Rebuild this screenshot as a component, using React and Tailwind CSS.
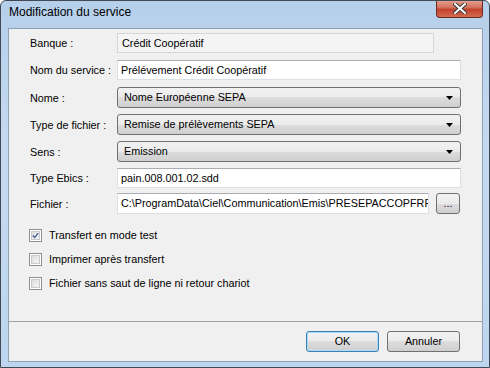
export default function App() {
  const label = "w-[87px] shrink-0 pt-[1px] text-[10.8px] leading-none text-black";
  const combo =
    "h-[21px] w-[344px] flex items-center justify-between pl-[6px] pr-[7px] border border-[#707070] rounded-[3px] bg-[linear-gradient(to_bottom,#f2f2f2_0%,#ebebeb_50%,#dddddd_50%,#cfcfcf_100%)] text-[10.8px] text-black";
  const textbox =
    "flex items-center pl-[3px] bg-white border border-[#dbdfe6] border-t-[#abadb3] text-[10.8px] text-black overflow-hidden whitespace-nowrap";
  const gradient =
    "rounded-[3px] border bg-[linear-gradient(to_bottom,#f2f2f2_0%,#ebebeb_50%,#dddddd_50%,#cfcfcf_100%)] text-[10.8px] text-black";

  const Arrow = () => (
    <svg width="7" height="4" viewBox="0 0 7 4">
      <path d="M0 0 H7 L3.5 4 Z" fill="#000" />
    </svg>
  );

  const Check = ({ checked }) => (
    <div className="w-[13px] h-[13px] border border-[#8e8f8f] bg-white p-[1px] shrink-0">
      <div className="w-full h-full border border-[#c7c9cc] bg-[linear-gradient(135deg,#dcdcdc,#f6f6f6)] flex items-center justify-center">
        {checked && (
          <svg width="9" height="9" viewBox="0 0 9 9">
            <path d="M1 4.5 L3.5 7 L8 1.5" fill="none" stroke="#4a5f97" strokeWidth="1.8" />
          </svg>
        )}
      </div>
    </div>
  );

  return (
    <div
      className="w-[490px] h-[368px] flex flex-col border border-[#3f4a56] rounded-t-[6px] bg-[linear-gradient(to_bottom,#b6cfea,#c4daf0_40%,#bdd5ee)] overflow-hidden"
      style={{ fontFamily: '"Liberation Sans", Arial, sans-serif' }}
    >
      {/* barre de titre */}
      <div className="h-[27px] flex items-start shrink-0">
        <div className="pl-[8px] pt-[5px] text-[12px] leading-none text-black">Modification du service</div>
        <div className="ml-auto mr-[6px] mt-[-1px] w-[47px] h-[18px] rounded-b-[4px] border border-[#6e2a20] border-t-0 bg-[linear-gradient(to_bottom,#e8a493,#d0705b_45%,#c2412c_55%,#d46a4e)] flex items-center justify-center">
          <svg width="14" height="11" viewBox="0 0 14 11">
            <path d="M2 1 L12 10 M12 1 L2 10" stroke="#3a3a3a" strokeWidth="4" strokeLinecap="square" />
            <path d="M2 1 L12 10 M12 1 L2 10" stroke="#ffffff" strokeWidth="2" strokeLinecap="square" />
          </svg>
        </div>
      </div>

      {/* zone client */}
      <div className="ml-[7px] mr-[6px] h-[334px] shrink-0 border border-[#8da2b9] bg-[#f0f0f0] flex flex-col">
        <div className="flex-1 flex flex-col pl-[21px]">
          <div className="flex items-center mt-[4px]">
            <span className={label}>Banque :</span>
            <div className="h-[20px] w-[317px] flex items-center pl-[4px] border border-[#d5d5d5] bg-[#f4f4f4] text-[10.8px] text-black">
              Crédit Coopératif
            </div>
          </div>
          <div className="flex items-center mt-[7px]">
            <span className={label}>Nom du service :</span>
            <div className={textbox + " h-[20px] w-[344px]"}>Prélévement Crédit Coopératif</div>
          </div>
          <div className="flex items-center mt-[7px]">
            <span className={label}>Nome :</span>
            <div className={combo}>
              <span>Nome Européenne SEPA</span>
              <Arrow />
            </div>
          </div>
          <div className="flex items-center mt-[6px]">
            <span className={label}>Type de fichier :</span>
            <div className={combo}>
              <span>Remise de prélèvements SEPA</span>
              <Arrow />
            </div>
          </div>
          <div className="flex items-center mt-[6px]">
            <span className={label}>Sens :</span>
            <div className={combo}>
              <span>Emission</span>
              <Arrow />
            </div>
          </div>
          <div className="flex items-center mt-[6px]">
            <span className={label}>Type Ebics :</span>
            <div className={textbox + " h-[20px] w-[344px]"}>pain.008.001.02.sdd</div>
          </div>
          <div className="flex items-center mt-[5px]">
            <span className={label}>Fichier :</span>
            <div className={textbox + " h-[21px] w-[312px] shrink-0"}>
              C:\ProgramData\Ciel\Communication\Emis\PRESEPACCOPFRPP.txt
            </div>
            <div className={gradient + " h-[21px] w-[24px] shrink-0 ml-[7px] border-[#707070] flex items-end justify-center pb-[4px] leading-none"}>
              ...
            </div>
          </div>

          <div className="flex flex-col gap-[11px] mt-[15px] ml-[-1px]">
            <label className="flex items-center gap-[7px] text-[10.8px] text-black leading-none">
              <Check checked />
              Transfert en mode test
            </label>
            <label className="flex items-center gap-[7px] text-[10.8px] text-black leading-none">
              <Check />
              Imprimer après transfert
            </label>
            <label className="flex items-center gap-[7px] text-[10.8px] text-black leading-none">
              <Check />
              Fichier sans saut de ligne ni retour chariot
            </label>
          </div>
        </div>

        {/* boutons */}
        <div className="h-[40px] shrink-0 border-t border-[#a0a0a0] flex justify-end items-start gap-[8px] pt-[9px] pr-[22px]">
          <div className={gradient + " h-[21px] w-[73px] flex items-center justify-center border-[#3c7fb1] shadow-[inset_0_0_0_1px_#a8dcfa]"}>
            OK
          </div>
          <div className={gradient + " h-[21px] w-[73px] flex items-center justify-center border-[#707070]"}>
            Annuler
          </div>
        </div>
      </div>
    </div>
  );
}
